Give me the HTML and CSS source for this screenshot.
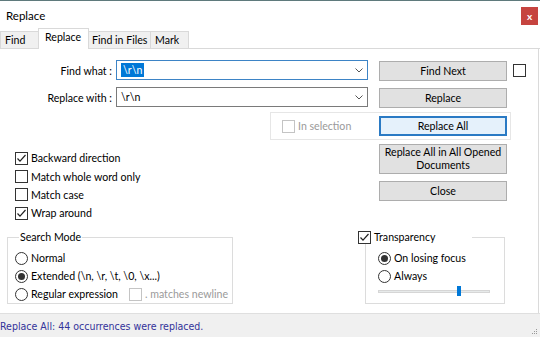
FILE: index.html
```html
<!DOCTYPE html>
<html lang="en">
<head>
    <meta charset="UTF-8">
    <meta name="viewport" content="width=device-width, initial-scale=1.0">
    <title>Replace</title>
    <link rel="stylesheet" href="styles.css">
</head>
<body>
    <div class="window">
        <div class="titlebar">
            <span class="title">Replace</span>
            <span class="close-btn">x</span>
        </div>

        <div class="tabs">
            <span class="tab tab-find">Find</span>
            <span class="tab tab-replace active">Replace</span>
            <span class="tab tab-files">Find in Files</span>
            <span class="tab tab-mark">Mark</span>
        </div>

        <div class="panel">
            <div class="row">
                <span class="field-label">Find what :</span>
                <div class="combo focused">
                    <span class="combo-text"><span class="selected">\r\n</span></span>
                    <svg class="chevron" width="8" height="5" viewBox="0 0 8 5"><path d="M0.5 0.5 L4 4 L7.5 0.5" fill="none" stroke="#555" stroke-width="1"/></svg>
                </div>
                <span class="btn">Find Next</span>
                <span class="box side-box"></span>
            </div>

            <div class="row row-second">
                <span class="field-label">Replace with :</span>
                <div class="combo">
                    <span class="combo-text">\r\n</span>
                    <svg class="chevron" width="8" height="5" viewBox="0 0 8 5"><path d="M0.5 0.5 L4 4 L7.5 0.5" fill="none" stroke="#555" stroke-width="1"/></svg>
                </div>
                <span class="btn">Replace</span>
            </div>

            <div class="selection-box">
                <span class="box disabled"></span>
                <span class="muted-text sel-text">In selection</span>
                <span class="btn btn-default">Replace All</span>
            </div>

            <div class="options">
                <div class="checks">
                    <div class="check-row">
                        <span class="box">
                            <svg width="11" height="11" viewBox="0 0 11 11"><path d="M1.5 5.5 L4 8.2 L9.5 2" fill="none" stroke="#222" stroke-width="1.2"/></svg>
                        </span>
                        <span>Backward direction</span>
                    </div>
                    <div class="check-row">
                        <span class="box"></span>
                        <span>Match whole word only</span>
                    </div>
                    <div class="check-row">
                        <span class="box"></span>
                        <span>Match case</span>
                    </div>
                    <div class="check-row">
                        <span class="box">
                            <svg width="11" height="11" viewBox="0 0 11 11"><path d="M1.5 5.5 L4 8.2 L9.5 2" fill="none" stroke="#222" stroke-width="1.2"/></svg>
                        </span>
                        <span>Wrap around</span>
                    </div>
                </div>
                <div class="actions">
                    <span class="btn btn-tall">Replace All in All Opened<br>Documents</span>
                    <span class="btn">Close</span>
                </div>
            </div>

            <div class="groups">
                <fieldset class="group search-mode">
                    <legend class="group-title">Search Mode</legend>
                    <div class="group-body">
                        <div class="radio-row">
                            <span class="radio"></span>
                            <span>Normal</span>
                        </div>
                        <div class="radio-row">
                            <span class="radio on"></span>
                            <span>Extended (\n, \r, \t, \0, \x...)</span>
                        </div>
                        <div class="radio-row">
                            <span class="radio"></span>
                            <span class="regex-text">Regular expression</span>
                            <span class="box disabled"></span>
                            <span class="muted-text">. matches newline</span>
                        </div>
                    </div>
                </fieldset>

                <fieldset class="group transparency">
                    <legend class="group-check">
                        <span class="box">
                            <svg width="11" height="11" viewBox="0 0 11 11"><path d="M1.5 5.5 L4 8.2 L9.5 2" fill="none" stroke="#222" stroke-width="1.2"/></svg>
                        </span>
                        <span>Transparency</span>
                    </legend>
                    <div class="group-body">
                        <div class="radio-row">
                            <span class="radio on"></span>
                            <span>On losing focus</span>
                        </div>
                        <div class="radio-row">
                            <span class="radio"></span>
                            <span>Always</span>
                        </div>
                        <div class="slider">
                            <div class="slider-track">
                                <span class="slider-thumb"></span>
                            </div>
                        </div>
                    </div>
                </fieldset>
            </div>
        </div>

        <div class="statusbar">
            <span class="status-text">Replace All: 44 occurrences were replaced.</span>
            <svg class="grip" width="7" height="7" viewBox="0 0 7 7">
                <rect x="5" y="1" width="1" height="1" fill="#999"/>
                <rect x="3" y="3" width="1" height="1" fill="#999"/>
                <rect x="5" y="3" width="1" height="1" fill="#999"/>
                <rect x="1" y="5" width="1" height="1" fill="#999"/>
                <rect x="3" y="5" width="1" height="1" fill="#999"/>
                <rect x="5" y="5" width="1" height="1" fill="#999"/>
            </svg>
        </div>
    </div>
</body>
</html>
```

FILE: styles.css
```css
body {
    margin: 0;
    font-family: Lato, "Noto Sans", sans-serif;
    font-size: 10.6px;
    color: #000;
    background-color: #fff;
    white-space: nowrap;
}
.window {
    width: 540px;
    height: 337px;
    box-sizing: border-box;
    border-top: 1px solid #5f7a7c;
    display: flex;
    flex-direction: column;
    background-color: #fff;
}

/* title bar */
.titlebar {
    height: 27px;
    display: flex;
    align-items: center;
    justify-content: space-between;
    padding-left: 6px;
}
.title {
    font-size: 11.5px;
    margin-top: 2px;
}
.close-btn {
    width: 17px;
    height: 18px;
    margin-right: 2px;
    margin-top: 3px;
    background-color: #c6443f;
    color: #fff;
    font-size: 10px;
    font-weight: bold;
    display: flex;
    align-items: center;
    justify-content: center;
}

/* tabs */
.tabs {
    height: 20px;
    display: flex;
    align-items: flex-end;
    border-bottom: 1px solid #d9d9d9;
}
.tab {
    height: 17px;
    box-sizing: border-box;
    border: 1px solid #d9d9d9;
    border-bottom: none;
    background-color: #f0f0f0;
    margin-right: -1px;
    padding-left: 4px;
    line-height: 16px;
}
.tab.active {
    height: 21px;
    margin-bottom: -1px;
    background-color: #fff;
    padding-left: 6px;
    line-height: 17px;
    position: relative;
}
.tab-find { width: 39px; }
.tab-replace { width: 51px; }
.tab-files { width: 63px; padding-left: 3px; }
.tab-mark { width: 39px; }

/* panel */
.panel {
    flex: 1;
    border-right: 1px solid #dadada;
    margin-right: 1px;
}
.row {
    display: flex;
    align-items: center;
    height: 21px;
    margin-top: 11px;
}
.row-second {
    margin-top: 6px;
}
.field-label {
    width: 112px;
    text-align: right;
}
.combo {
    width: 252px;
    height: 20px;
    margin-left: 4px;
    box-sizing: border-box;
    border: 1px solid #7a7a7a;
    display: flex;
    align-items: center;
    justify-content: space-between;
    padding-left: 4px;
    padding-right: 4px;
    align-self: flex-start;
}
.combo.focused {
    border-color: #3d84c6;
}
.selected {
    background-color: #0078d7;
    color: #fff;
    padding: 1px 2px;
}
.btn {
    width: 128px;
    height: 20px;
    box-sizing: border-box;
    border: 1px solid #adadad;
    background-color: #e1e1e1;
    display: flex;
    align-items: center;
    justify-content: center;
    text-align: center;
    line-height: 13px;
}
.row .btn {
    margin-left: 11px;
    align-self: flex-end;
}
.btn-default {
    border: 2px solid #2a7ac4;
    background-color: #e5f1fb;
    margin-left: auto;
}
.btn-tall {
    height: 30px;
}
.box {
    width: 13px;
    height: 13px;
    box-sizing: border-box;
    border: 1px solid #333;
    background-color: #fff;
    display: inline-flex;
    align-items: center;
    justify-content: center;
    flex-shrink: 0;
}
.box.disabled {
    border-color: #c4c4c4;
}
.side-box {
    margin-left: 6px;
}
.muted-text {
    color: #9a9a9a;
}

/* in selection group */
.selection-box {
    margin-top: 4px;
    margin-left: 270px;
    width: 241px;
    height: 28px;
    box-sizing: border-box;
    border: 1px solid #e6e6e6;
    display: flex;
    align-items: center;
    padding-left: 11px;
    padding-right: 3px;
}
.sel-text {
    margin-left: 3px;
}

/* options */
.options {
    display: flex;
    height: 86px;
    margin-top: 4px;
}
.checks {
    width: 364px;
    padding-left: 15px;
    padding-top: 5px;
}
.check-row {
    display: flex;
    align-items: center;
    gap: 3px;
    height: 18.4px;
}
.actions {
    display: flex;
    flex-direction: column;
    gap: 7px;
}

/* group boxes */
.groups {
    display: flex;
}
.group {
    border: 1px solid #dcdcdc;
    margin: 0;
    padding: 0;
    min-width: 0;
    box-sizing: border-box;
}
.search-mode {
    margin-left: 7px;
    width: 226px;
}
.search-mode .group-body {
    padding: 5px 0 0 7px;
}
.group-title {
    margin-left: 11px;
    padding: 0 1px;
    line-height: 14px;
}
.radio-row {
    display: flex;
    align-items: center;
    gap: 3px;
    height: 18px;
}
.radio {
    width: 13px;
    height: 13px;
    box-sizing: border-box;
    border: 1px solid #333;
    border-radius: 50%;
    display: inline-flex;
    align-items: center;
    justify-content: center;
}
.radio.on::after {
    content: "";
    width: 7px;
    height: 7px;
    border-radius: 50%;
    background-color: #333;
}
.regex-text {
    width: 95px;
}
.transparency {
    margin-left: 132px;
    width: 140px;
}
.transparency .group-body {
    padding: 5px 0 6px 12px;
}
.group-check {
    margin-left: -8px;
    width: 114px;
    padding: 0;
    display: flex;
    align-items: center;
    gap: 3px;
    line-height: 14px;
}
.slider {
    height: 12px;
    display: flex;
    align-items: center;
}
.slider-track {
    width: 112px;
    height: 3px;
    box-sizing: border-box;
    border: 1px solid #d6d6d6;
    background-color: #e7eaea;
    display: flex;
    align-items: center;
    padding-left: 78px;
}
.slider-thumb {
    width: 4px;
    height: 10px;
    background-color: #0078d7;
    flex-shrink: 0;
}

/* status bar */
.statusbar {
    height: 24px;
    box-sizing: border-box;
    border-top: 1px solid #dfdfdf;
    background-color: #f0f0f0;
    display: flex;
    align-items: center;
    justify-content: space-between;
}
.status-text {
    font-family: "DejaVu Sans", sans-serif;
    font-stretch: condensed;
    font-size: 10.5px;
    color: #33339a;
}
.grip {
    align-self: flex-end;
    margin-right: 2px;
    margin-bottom: 2px;
}
```
